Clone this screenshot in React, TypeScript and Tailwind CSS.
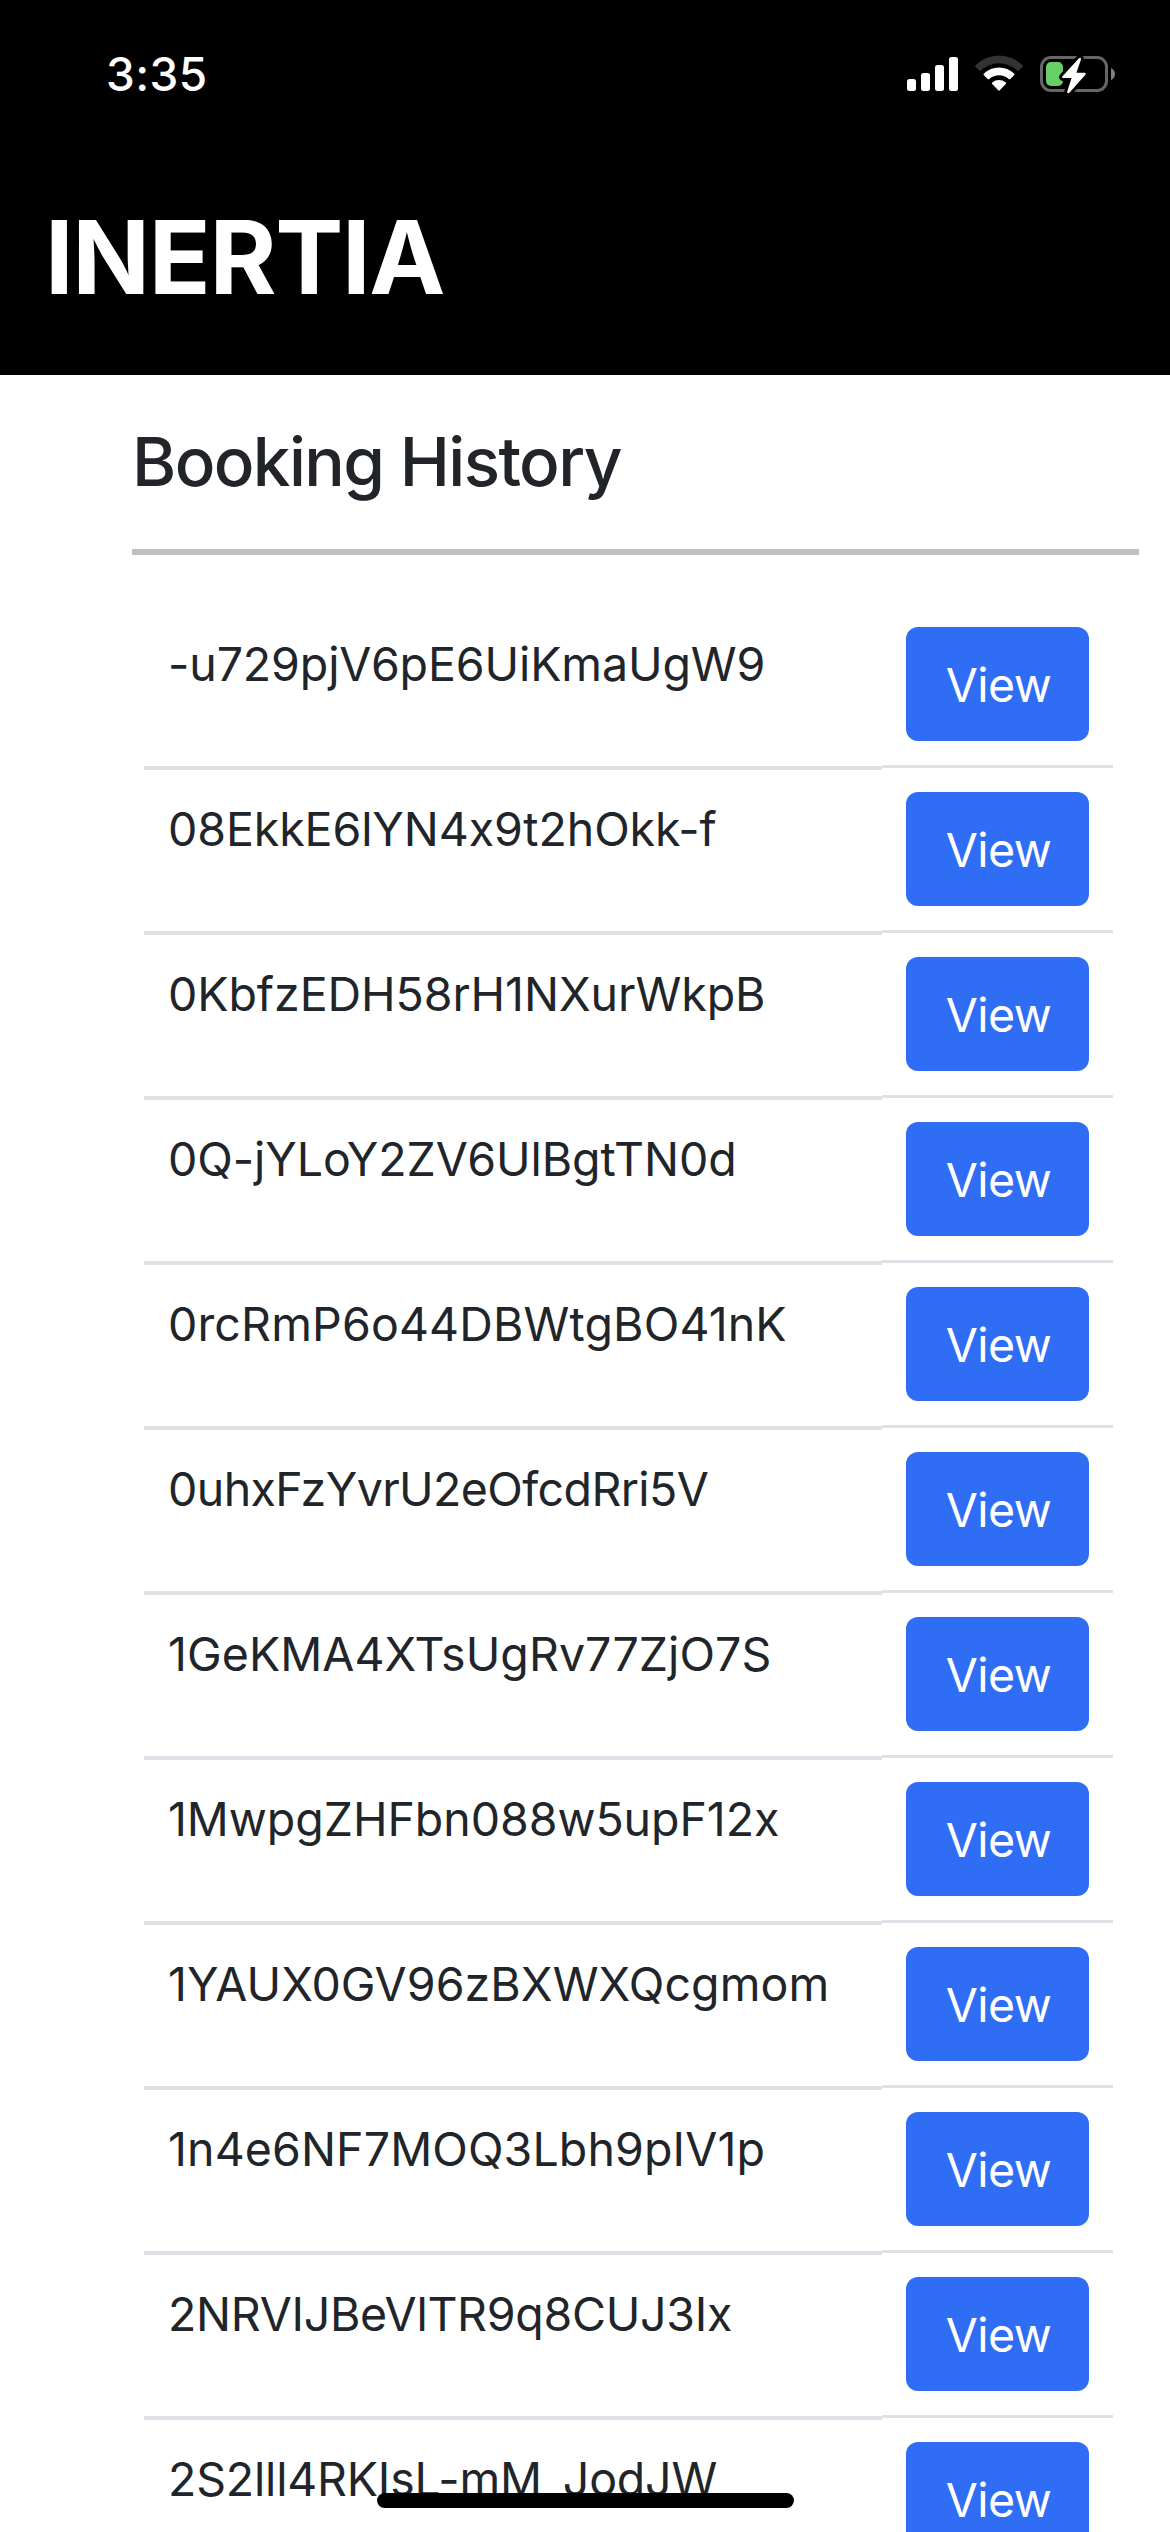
const bookings = [
  { id: '-u729pjV6pE6UiKmaUgW9', tracking: 'tracking-[-0.11px]' },
  { id: '08EkkE6lYN4x9t2hOkk-f', tracking: 'tracking-[-0.1px]' },
  { id: '0KbfzEDH58rH1NXurWkpB', tracking: 'tracking-[-0.06px]' },
  { id: '0Q-jYLoY2ZV6UlBgtTN0d', tracking: 'tracking-[-0.08px]' },
  { id: '0rcRmP6o44DBWtgBO41nK', tracking: 'tracking-[0.15px]' },
  { id: '0uhxFzYvrU2eOfcdRri5V', tracking: 'tracking-[-0.6px]' },
  { id: '1GeKMA4XTsUgRv77ZjO7S', tracking: 'tracking-[0.06px]' },
  { id: '1MwpgZHFbn088w5upF12x', tracking: 'tracking-[-0.05px]' },
  { id: '1YAUX0GV96zBXWXQcgmom', tracking: 'tracking-[0.09px]' },
  { id: '1n4e6NF7MOQ3Lbh9pIV1p', tracking: 'tracking-[0.12px]' },
  { id: '2NRVIJBeVlTR9q8CUJ3Ix', tracking: 'tracking-[-0.28px]' },
  { id: '2S2lll4RKIsL-mM_JodJW', tracking: 'tracking-[-0.19px]' },
];

function SignalIcon() {
  return (
    <svg width="51" height="34" viewBox="0 0 51 34" fill="white" aria-hidden="true">
      <rect x="0" y="22" width="9" height="12" rx="2.5" />
      <rect x="14" y="16" width="9" height="18" rx="2.5" />
      <rect x="28" y="8" width="9" height="26" rx="2.5" />
      <rect x="42" y="0" width="9" height="34" rx="2.5" />
    </svg>
  );
}

function WifiIcon() {
  return (
    <svg width="48" height="36" viewBox="0 0 48 36" aria-hidden="true">
      <path
        d="M0.6 10.2A33 33 0 0 1 47.4 10.2Q48.3 11 47.5 11.9L43.7 15.6Q43 16.3 42.2 15.6A26.5 26.5 0 0 0 5.8 15.6Q5 16.3 4.3 15.6L0.5 11.9Q-0.3 11 0.6 10.2Z"
        fill="#333333"
      />
      <path
        d="M8.9 18.6A21.7 21.7 0 0 1 39.1 18.6Q39.9 19.4 39.1 20.2L35.3 24Q34.5 24.7 33.7 24A14.5 14.5 0 0 0 14.3 24Q13.5 24.7 12.7 24L8.9 20.2Q8.1 19.4 8.9 18.6Z"
        fill="white"
      />
      <path
        d="M17.3 27.5A10.5 10.5 0 0 1 30.7 27.5Q31.6 28.3 30.8 29.1L24.8 35.3Q24 36.1 23.2 35.3L17.2 29.1Q16.4 28.3 17.3 27.5Z"
        fill="white"
      />
    </svg>
  );
}

function BatteryIcon() {
  return (
    <svg width="76" height="40" viewBox="0 0 76 40" aria-hidden="true">
      <rect x="1.5" y="3.5" width="65" height="33" rx="9.5" fill="none" stroke="#666666" strokeWidth="3" />
      <path d="M71 14Q75 16 75 20Q75 24 71 26Z" fill="#808080" />
      <rect x="6" y="8" width="17" height="24" rx="5" fill="#68ce67" />
      <path
        d="M39 4.2L22.5 22.2Q21.4 24 23.3 24H31.6L27.2 37.6Q27 40 29.4 38.8L45.4 20.8Q46.4 19 44.6 18.8H36.4L41 5.4Q41 2.8 39 4.2Z"
        fill="white"
        stroke="black"
        strokeWidth="6"
        strokeLinejoin="round"
        paintOrder="stroke"
      />
    </svg>
  );
}

function StatusBar() {
  return (
    <div className="flex h-[148px] items-center justify-between pr-[54px] pl-[106px]">
      <span className="text-[46px] leading-none font-medium tracking-[0.4px]">3:35</span>
      <div className="flex items-center">
        <SignalIcon />
        <div className="-mt-[2px] ml-[17px]">
          <WifiIcon />
        </div>
        <div className="ml-[17px]">
          <BatteryIcon />
        </div>
      </div>
    </div>
  );
}

function BookingRow({ id, tracking }: { id: string; tracking: string }) {
  return (
    <li className="flex h-[165px] items-start">
      <div className="h-[167px] w-[738px] border-b-4 border-[#dee2e6] pt-[25px] pl-[24px]">
        <span className={`block text-[46.5px] leading-[72px] whitespace-nowrap ${tracking}`}>{id}</span>
      </div>
      <div className="h-[165px] w-[231px] border-b-3 border-[#dee2e6] px-6 pt-6">
        <button className="flex h-[114px] w-[183px] items-center justify-center rounded-[12px] bg-[#306df5] pt-[2px] pl-[2px] text-[46.5px] leading-none tracking-[-0.5px] text-white">
          View
        </button>
      </div>
    </li>
  );
}

export default function App() {
  return (
    <div className="relative flex h-[2532px] w-[1170px] flex-col overflow-hidden bg-white font-['Inter',sans-serif] text-[#212529] [font-feature-settings:'calt'_0]">
      <header className="h-[375px] shrink-0 bg-black text-white">
        <StatusBar />
        <div className="flex h-[218px] items-center pl-[45px]">
          <h1 className="text-[102px] leading-none font-bold tracking-[-1.29px]">INERTIA</h1>
        </div>
      </header>
      <main className="pr-[31px] pl-[132px]">
        <div className="flex h-[180px] items-center border-b-6 border-[#bfbfbf]">
          <h2 className="text-[67.4px] leading-none font-medium tracking-[-1.6px]">Booking History</h2>
        </div>
        <ul className="mt-12 pl-3">
          {bookings.map((b) => (
            <BookingRow key={b.id} id={b.id} tracking={b.tracking} />
          ))}
        </ul>
      </main>
      <div className="absolute bottom-6 left-[377px] h-[15px] w-[417px] rounded-full bg-black" />
    </div>
  );
}
